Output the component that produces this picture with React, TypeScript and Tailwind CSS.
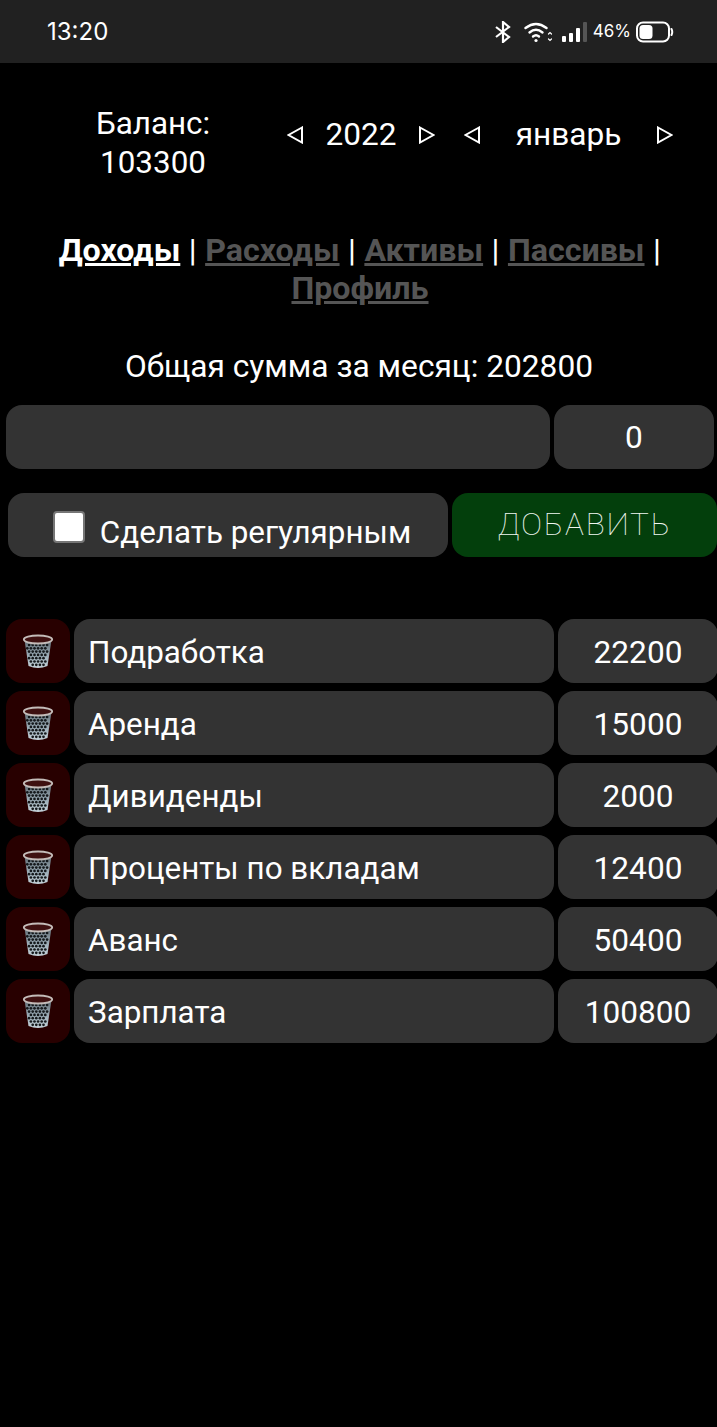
const rows = [
  { name: "Подработка", sum: "22200" },
  { name: "Аренда", sum: "15000" },
  { name: "Дивиденды", sum: "2000" },
  { name: "Проценты по вкладам", sum: "12400" },
  { name: "Аванс", sum: "50400" },
  { name: "Зарплата", sum: "100800" },
];

function TrashIcon() {
  const dots: [number, number][] = [];
  for (let r = 0; r < 7; r++) {
    for (let c = 0; c < 8; c++) {
      const x = 3.5 + c * 3.6 + (r % 2 ? 1.8 : 0);
      const y = 11 + r * 3.3;
      const half = 11.5 - r * 0.6;
      if (Math.abs(x - 16) < half) dots.push([x, y]);
    }
  }
  return (
    <svg className="mt-[2px]" width="32" height="36" viewBox="0 0 32 36">
      <defs>
        <linearGradient id="can" x1="0" y1="0" x2="0" y2="1">
          <stop offset="0" stopColor="#5f6a72" />
          <stop offset="0.6" stopColor="#9fb0ba" />
          <stop offset="1" stopColor="#c5d2d9" />
        </linearGradient>
      </defs>
      <path d="M2.5 6 L6.5 32 Q16 36 25.5 32 L29.5 6 Z" fill="url(#can)" />
      {dots.map(([x, y], i) => (
        <circle key={i} cx={x} cy={y} r="1.35" fill="#15191c" />
      ))}
      <ellipse cx="16" cy="5.5" rx="14.2" ry="4" fill="#3e1010" stroke="#c4bcb9" strokeWidth="1.8" />
    </svg>
  );
}

function Tri({ dir }: { dir: "l" | "r" }) {
  return (
    <svg className="shrink-0" width="16" height="18" viewBox="0 0 16 18" fill="none" stroke="#fff" strokeWidth="2">
      {dir === "l" ? <path d="M15 1.5 L1.5 9 L15 16.5 Z" /> : <path d="M1 1.5 L14.5 9 L1 16.5 Z" />}
    </svg>
  );
}

function StatusIcons() {
  return (
    <div className="flex items-center">
      <svg width="16" height="22" viewBox="0 0 16 22" fill="none" stroke="#fff" strokeWidth="2.2">
        <path d="M1 6 L14 16 L8 21 L8 1 L14 6 L1 16" />
      </svg>
      <svg className="ml-[13px]" width="28" height="22" viewBox="0 0 28 22" fill="none" stroke="#fff" strokeWidth="2.4" strokeLinecap="round">
        <path d="M1.5 7 Q12 -1 22.5 7" />
        <path d="M5.5 11.5 Q12 6 18.5 11.5" />
        <path d="M9 15.5 Q12 13 15 15.5" />
        <circle cx="12" cy="19.5" r="1.6" fill="#fff" stroke="none" />
        <path d="M24.5 13 l1.5 -1.5 l1.5 1.5 M24.5 18 l1.5 1.5 l1.5 -1.5" strokeWidth="1.2" />
      </svg>
      <svg className="ml-[9px]" width="26" height="24" viewBox="0 0 26 24">
        <rect x="1" y="16" width="4" height="6" rx="1" fill="#fff" />
        <rect x="8" y="13" width="4" height="9" rx="1" fill="#fff" />
        <rect x="15" y="8" width="4" height="14" rx="1" fill="#fff" />
        <rect x="22" y="2" width="4" height="20" rx="1" fill="#555" />
      </svg>
      <span className="ml-[6px] text-[17px] leading-none text-white font-['Inter',sans-serif]">46%</span>
      <svg className="ml-[5px]" width="38" height="22" viewBox="0 0 38 22" fill="none">
        <rect x="1" y="1.5" width="32" height="19" rx="6" stroke="#fff" strokeWidth="2" />
        <rect x="3.5" y="4" width="13" height="14" rx="3.5" fill="#fff" />
        <path d="M35.5 8 Q37 11 35.5 14" stroke="#fff" strokeWidth="2" strokeLinecap="round" />
      </svg>
    </div>
  );
}

export default function App() {
  return (
    <div className="w-[717px] h-[1427px] bg-black text-white overflow-hidden font-['Roboto',sans-serif] text-[31.6px]">
      <div className="h-[63px] bg-[#212121] flex items-center justify-between pl-[47px] pr-[43px]">
        <span className="text-[24px] font-['Inter',sans-serif] text-white">13:20</span>
        <StatusIcons />
      </div>

      <div className="flex items-center h-[116px] mt-[22px]">
        <div className="w-[287px] pl-[19px] text-center leading-[38px] text-[31.4px]">
          <div>Баланс:</div>
          <div className="pt-[1px]">103300</div>
        </div>
        <div className="flex items-center -mt-[16px]">
          <Tri dir="l" />
          <span className="w-[116px] text-center leading-[38px]">2022</span>
          <Tri dir="r" />
          <span className="w-[29px]" />
          <Tri dir="l" />
          <span className="w-[177px] text-center leading-[38px]">январь</span>
          <Tri dir="r" />
        </div>
      </div>

      <div className="mt-[30px] pl-[9px] pr-[6px] text-center font-bold leading-[38px] text-[32.2px]">
        <a className="underline text-white">Доходы</a>
        <span className="font-normal mx-[0.5px]"> | </span>
        <a className="underline text-[#555]">Расходы</a>
        <span className="font-normal mx-[0.5px]"> | </span>
        <a className="underline text-[#555]">Активы</a>
        <span className="font-normal mx-[0.5px]"> | </span>
        <a className="underline text-[#555]">Пассивы</a>
        <span className="font-normal mx-[0.5px]"> | </span>
        <a className="underline text-[#555]">Профиль</a>
      </div>

      <div className="mt-[41px] pl-[1px] text-center leading-[38px] text-[31.7px]">Общая сумма за месяц: 202800</div>

      <div className="mt-[19px] flex gap-1 pl-[6px]">
        <div className="w-[544px] h-16 shrink-0 rounded-[16px] bg-[#333]" />
        <div className="w-[160px] h-16 shrink-0 rounded-[16px] bg-[#333] flex items-center justify-center pt-[2px]">0</div>
      </div>

      <div className="mt-6 flex gap-1 pl-2">
        <div className="w-[440px] h-16 shrink-0 rounded-[16px] bg-[#333] flex items-center justify-center gap-[15px] pl-[8px]">
          <span className="w-[32px] h-[32px] mt-[4px] rounded-[4px] bg-white border-2 border-[#767676]" />
          <span className="mt-[15px] text-[31.4px]">Сделать регулярным</span>
        </div>
        <div className="w-[265px] h-16 shrink-0 rounded-[16px] bg-[#033f0c] flex items-center justify-center font-thin text-[#f0f7f1] tracking-[1.7px]">
          ДОБАВИТЬ
        </div>
      </div>

      <div className="mt-[62px] flex flex-col gap-2 pl-[6px]">
        {rows.map((r) => (
          <div key={r.name} className="flex gap-1">
            <div className="w-16 h-16 shrink-0 rounded-[16px] bg-[#280000] flex items-center justify-center">
              <TrashIcon />
            </div>
            <div className="w-[480px] h-16 shrink-0 rounded-[16px] bg-[#333] flex items-center pl-[14px] pt-[4px] text-[31.4px]">{r.name}</div>
            <div className="w-[160px] h-16 shrink-0 rounded-[16px] bg-[#333] flex items-center justify-center pt-[4px]">{r.sum}</div>
          </div>
        ))}
      </div>
    </div>
  );
}
